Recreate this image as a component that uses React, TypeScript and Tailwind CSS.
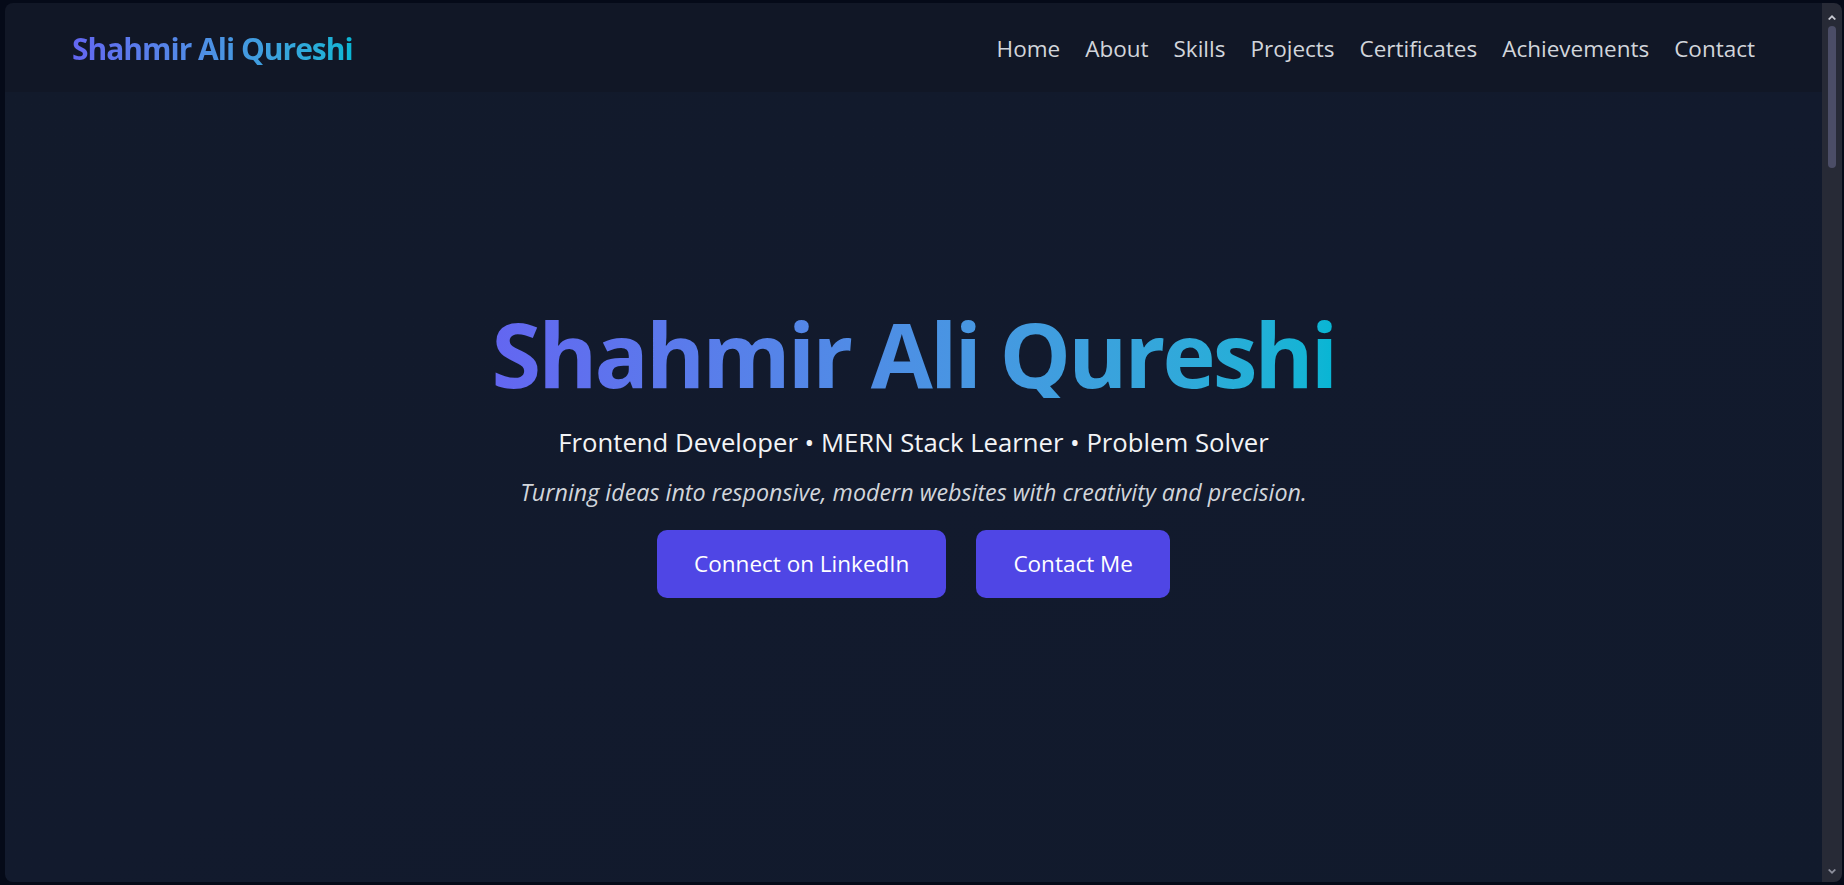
import React from "react";

const links = ["Home", "About", "Skills", "Projects", "Certificates", "Achievements", "Contact"];

const font = { fontFamily: '"Open Sans", "Noto Sans", sans-serif' };

const Scrollbar = () => (
  <div className="flex w-[20px] flex-col items-center bg-[#272a36]">
    <svg width="10" height="8" viewBox="0 0 10 8" className="mt-[10px]">
      <polygon points="1,6 5,2 9,6 7.5,7 5,4.5 2.5,7" fill="#c9cad3" />
    </svg>
    <div className="mt-[5px] h-[142px] w-[8px] rounded-full bg-[#4b4d66]" />
    <div className="flex-1" />
    <svg width="10" height="8" viewBox="0 0 10 8" className="mb-[6px]">
      <polygon points="1,2 5,6 9,2 7.5,1 5,3.5 2.5,1" fill="#8d8f9c" />
    </svg>
  </div>
);

const Header = () => (
  <header className="flex h-[89px] items-center justify-between bg-[#111726] px-[67px] pt-[2px] shadow-[0_1px_0_rgba(255,255,255,0.02)]">
    <a className="bg-linear-to-r from-[#6366f1] to-[#06b6d4] bg-clip-text text-[30px] font-bold tracking-[-1px] text-transparent">
      Shahmir Ali Qureshi
    </a>
    <nav className="flex items-center gap-[25px] text-[22.5px] text-[#d1d5db]">
      {links.map((l) => (
        <a key={l} className="hover:text-white">
          {l}
        </a>
      ))}
    </nav>
  </header>
);

const Hero = () => (
  <main className="flex flex-1 flex-col items-center bg-linear-to-br from-[#121a2b] via-[#121a2d] to-[#111a2c] pt-[216px]">
    <h1 className="bg-linear-to-r from-[#6366f1] to-[#06b6d4] bg-clip-text text-[90px] leading-[90px] font-bold tracking-[-2.9px] text-transparent">
      Shahmir Ali Qureshi
    </h1>
    <p className="mt-[27px] text-[25.7px] leading-[35px] text-gray-100">
      Frontend Developer • MERN Stack Learner • Problem Solver
    </p>
    <p className="mt-[15px] text-[23.3px] leading-[35px] text-[#d1d5db] italic">
      Turning ideas into responsive, modern websites with creativity and precision.
    </p>
    <div className="mt-[20px] flex gap-[30px]">
      <button className="h-[68px] rounded-[10px] bg-[#4f46e5] px-[37px] text-[22.5px] text-white">
        Connect on LinkedIn
      </button>
      <button className="h-[68px] rounded-[10px] bg-[#4f46e5] px-[37px] text-[22.5px] text-white">
        Contact Me
      </button>
    </div>
  </main>
);

export default function App() {
  return (
    <div className="h-screen w-full bg-[#050a18] pt-[3px] pr-[2px] pb-[3px] pl-[5px]" style={font}>
      <div className="flex h-full overflow-hidden rounded-[8px]">
        <div className="flex flex-1 flex-col">
          <Header />
          <Hero />
        </div>
        <Scrollbar />
      </div>
    </div>
  );
}
